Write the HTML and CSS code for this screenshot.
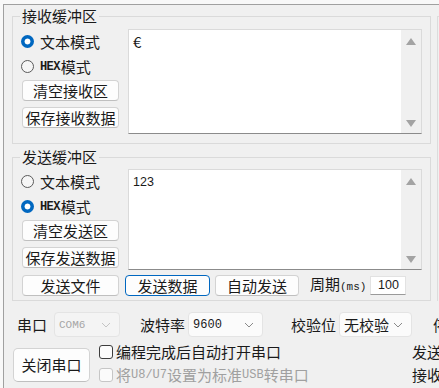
FILE: index.html
```html
<!DOCTYPE html>
<html lang="zh-CN">

<head>
    <meta charset="utf-8">
    <title>串口助手</title>
    <link rel="stylesheet" href="styles.css">
</head>

<body>
    <div class="win">
        <div class="top">
            <div class="left">
                <!-- 接收 -->
                <div class="group recv">
                    <div class="group-title">接收缓冲区</div>
                    <div class="group-body">
                        <div class="side">
                            <div class="radio"><span class="dot on"></span>文本模式</div>
                            <div class="radio"><span class="dot"></span><span class="hex">HEX</span>模式</div>
                            <button class="btn">清空接收区</button>
                            <button class="btn">保存接收数据</button>
                        </div>
                        <div class="textbox recv-box">
                            <div class="text">€</div>
                            <div class="scroll"><span class="arrow up"></span><span class="arrow down"></span></div>
                        </div>
                    </div>
                </div>

                <!-- 发送 -->
                <div class="group send">
                    <div class="group-title">发送缓冲区</div>
                    <div class="group-body">
                        <div class="side">
                            <div class="radio"><span class="dot"></span>文本模式</div>
                            <div class="radio"><span class="dot on"></span><span class="hex">HEX</span>模式</div>
                            <button class="btn">清空发送区</button>
                            <button class="btn">保存发送数据</button>
                        </div>
                        <div class="textbox send-box">
                            <div class="text num">123</div>
                            <div class="scroll"><span class="arrow up"></span><span class="arrow down"></span></div>
                        </div>
                    </div>
                    <div class="actions">
                        <button class="btn">发送文件</button>
                        <button class="btn focus">发送数据</button>
                        <button class="btn auto">自动发送</button>
                        <span class="period">周期<span class="ms">(ms)</span></span>
                        <span class="input">100</span>
                    </div>
                </div>
            </div>
            <div class="stub"></div>
        </div>

        <div class="bottom">
            <div class="row1">
                <span class="lbl first">串口</span>
                <span class="select port disabled"><span class="mono">COM6</span>
                    <svg width="10" height="6"><polyline points="1,1 5,5 9,1" fill="none" stroke="#c4c4c4" /></svg></span>
                <span class="lbl baud-lbl">波特率</span>
                <span class="select baud"><span class="mono">9600</span>
                    <svg width="10" height="6"><polyline points="1,1 5,5 9,1" fill="none" stroke="#8a8a8a" /></svg></span>
                <span class="lbl parity-lbl">校验位</span>
                <span class="select parity">无校验
                    <svg width="10" height="6"><polyline points="1,1 5,5 9,1" fill="none" stroke="#8a8a8a" /></svg></span>
                <span class="lbl stop-lbl">停止位</span>
            </div>
            <div class="row2">
                <button class="btn close">关闭串口</button>
                <div class="checks">
                    <div class="check"><span class="box"></span>编程完成后自动打开串口</div>
                    <div class="check off"><span class="box"></span>将<span class="mono">U8/U7</span>设置为标准<span class="mono">USB</span>转串口</div>
                </div>
                <div class="status">
                    <div class="stat">发送 0</div>
                    <div class="stat">接收 0</div>
                </div>
            </div>
        </div>
    </div>
</body>

</html>
```

FILE: styles.css
```css
* {
    box-sizing: border-box;
}

body {
    margin: 0;
    width: 439px;
    height: 388px;
    overflow: hidden;
    background-color: #f8f8f8;
    font-family: "Noto Sans CJK SC", sans-serif;
    font-size: 15px;
    color: #1a1a1a;
}

.win {
    margin: 4px 0 0 3px;
    height: 384px;
    border-top: 1px solid #a0a0a0;
    border-left: 1px solid #a0a0a0;
    background-color: #f0f0f0;
}

.top {
    display: flex;
}

.left {
    width: 427px;
    flex-shrink: 0;
    padding-left: 8px;
}

.stub {
    width: 30px;
    height: 285px;
    margin: 11px 0 0 6px;
    border-top: 1px solid #dcdcdc;
    border-left: 1px solid #dcdcdc;
}

.group {
    width: 419px;
    border: 1px solid #dadada;
}

.recv {
    margin-top: 11px;
}

.send {
    margin-top: 13px;
}

.group-title {
    width: fit-content;
    height: 20px;
    margin: -11px 0 0 7px;
    padding: 0 2px;
    line-height: 20px;
    background-color: #f0f0f0;
}

.group-body {
    display: flex;
    padding: 3px 8px 9px 8px;
}

.send .group-body {
    padding: 2px 8px 0 8px;
}

.side {
    width: 107px;
    flex-shrink: 0;
}

.radio {
    height: 25px;
    display: flex;
    align-items: center;
    line-height: 20px;
}

.dot {
    width: 13px;
    height: 13px;
    margin-right: 6px;
    border-radius: 50%;
    border: 1px solid #5a5a5a;
    background-color: #f6f6f6;
}

.dot.on {
    border: none;
    background: radial-gradient(circle, #ffffff 0 2.6px, #0067c0 3.3px);
}

.hex {
    font-family: "Liberation Mono", monospace;
    font-size: 12px;
    font-weight: bold;
    letter-spacing: -0.6px;
    margin-right: 1px;
}

.btn {
    display: block;
    flex-shrink: 0;
    width: 97px;
    height: 21px;
    margin-left: 1px;
    padding: 0;
    border: 1px solid #d3d3d3;
    border-bottom-color: #bfbfbf;
    border-radius: 4px;
    background-color: #fdfdfd;
    font: inherit;
    line-height: 19px;
    color: inherit;
}

.side .btn {
    margin-top: 1px;
}

.side .btn + .btn {
    margin-top: 6px;
}

.textbox {
    width: 294px;
    display: flex;
    border: 1px solid #dadada;
    border-bottom-color: #8b8b8b;
    background-color: #ffffff;
}

.recv-box {
    height: 105px;
}

.send-box {
    height: 101px;
}

.text {
    flex: 1;
    padding: 2px 4px;
    line-height: 20px;
}

.num {
    font-family: "Liberation Sans", sans-serif;
    font-size: 12.5px;
    padding-top: 2px;
}

.scroll {
    width: 20px;
    display: flex;
    flex-direction: column;
    justify-content: space-between;
    align-items: center;
    padding: 8px 0 6px;
    background-color: #f0f0f0;
}

.arrow {
    width: 0;
    height: 0;
    border-left: 5px solid transparent;
    border-right: 5px solid transparent;
}

.arrow.up {
    border-bottom: 7px solid #a3a3a3;
}

.arrow.down {
    border-top: 7px solid #a3a3a3;
}

.actions {
    display: flex;
    align-items: center;
    height: 22px;
    margin: 4px 0 4px 8px;
}

.actions .focus {
    width: 85px;
    margin-left: 6px;
    border-color: #0067c0;
}

.actions .auto {
    width: 84px;
    margin-left: 5px;
}

.period {
    margin-left: 11px;
    line-height: 20px;
}

.ms {
    font-family: "Liberation Mono", monospace;
    font-size: 11px;
}

.input {
    width: 36px;
    height: 19px;
    margin-left: 4px;
    border: 1px solid #e2e2e2;
    border-bottom-color: #9a9a9a;
    background-color: #ffffff;
    font-family: "Liberation Sans", sans-serif;
    font-size: 12.5px;
    line-height: 17px;
    text-align: center;
}

.bottom {
    padding-left: 9px;
}

.row1 {
    display: flex;
    align-items: center;
    height: 25px;
    margin-top: 11px;
}

.lbl {
    line-height: 20px;
    flex-shrink: 0;
}

.first {
    margin-left: 4px;
}

.baud-lbl {
    margin-left: 20px;
}

.parity-lbl {
    margin-left: 28px;
}

.stop-lbl {
    margin-left: 21px;
}

.select {
    height: 25px;
    margin-left: 3px;
    padding: 0 8px 0 4px;
    display: flex;
    align-items: center;
    justify-content: space-between;
    flex-shrink: 0;
    border: 1px solid #e4e4e4;
    border-radius: 4px;
    background-color: #fbfbfb;
    line-height: 20px;
}

.mono {
    font-family: "Liberation Mono", monospace;
    font-size: 12px;
}

.port {
    width: 66px;
    margin-left: 7px;
    background-color: #f4f4f4;
    color: #a6a6a6;
}

.port .mono {
    font-size: 11px;
}

.baud {
    width: 75px;
}

.parity {
    width: 73px;
}

.row2 {
    display: flex;
    margin-top: 5px;
}

.btn.close {
    width: 77px;
    height: 34px;
    margin: 6px 0 0 0;
    border-radius: 5px;
    line-height: 32px;
}

.checks {
    width: 313px;
    flex-shrink: 0;
    margin-left: 9px;
}

.check {
    height: 20px;
    display: flex;
    align-items: center;
    line-height: 20px;
    white-space: nowrap;
}

.check + .check {
    margin-top: 3px;
}

.box {
    width: 14px;
    height: 14px;
    margin-right: 3px;
    border: 1px solid #3c3c3c;
    border-radius: 3px;
    background-color: #fbfbfb;
}

.check.off {
    color: #a0a0a0;
}

.check.off .box {
    border-color: #c6c6c6;
}

.status {
    flex-shrink: 0;
    white-space: nowrap;
}

.stat {
    height: 20px;
    line-height: 20px;
}

.stat + .stat {
    margin-top: 3px;
}
```
